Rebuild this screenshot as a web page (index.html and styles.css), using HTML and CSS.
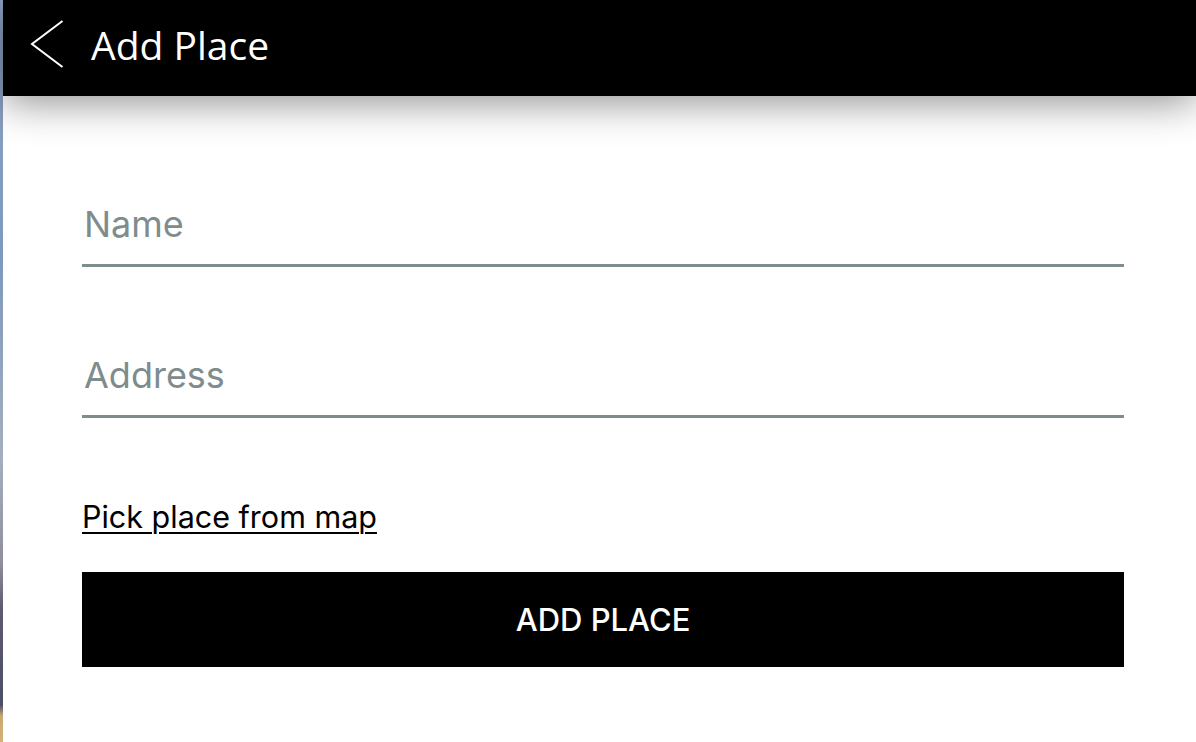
FILE: index.html
```html
<!DOCTYPE html>
<html>
<head>
<meta charset="utf-8">
<link rel="stylesheet" href="styles.css">
</head>
<body>
<div class="frame">
  <div class="edge"></div>
  <div class="app">
    <header class="topbar">
      <svg class="back" width="34" height="50" viewBox="0 0 34 50"><polyline points="32.5,2 2,25 32.5,48" fill="none" stroke="#fff" stroke-width="2"/></svg>
      <h1 class="title">Add Place</h1>
    </header>
    <main class="form">
      <div class="field"><span class="placeholder">Name</span></div>
      <div class="field"><span class="placeholder">Address</span></div>
      <a class="pick" href="#">Pick place from map</a>
      <div class="btn">ADD PLACE</div>
    </main>
  </div>
</div>
</body>
</html>
```
FILE: styles.css
```css
html, body { margin: 0; padding: 0; background: #fff; }
.frame { display: flex; width: 1196px; height: 742px; overflow: hidden; }
.edge {
  width: 3px; flex: none;
  background: linear-gradient(#8ea3c2 0%, #7f98bc 35%, #a3afbe 62%, #8f8e9c 76%, #5e5a70 82%, #4b4f68 95%, #c9a870 96.5%, #d4b27a 100%);
}
.app { flex: 1; display: flex; flex-direction: column; background: #fff; }
.topbar {
  height: 96px; background: #000; display: flex; align-items: center;
  padding-left: 27px; box-shadow: 0 6px 40px rgba(0,0,0,0.45); position: relative; z-index: 1;
}
.back { display: block; margin-bottom: 9px; }
.title {
  margin: 0 0 6px 27px; color: #fff; font-family: "Open Sans", sans-serif;
  font-weight: 400; font-size: 39px; line-height: 50px;
}
.form { padding: 101px 72px 0 79px; display: flex; flex-direction: column; }
.field {
  height: 70px; border-bottom: 3px solid #7f8c8d; display: flex; align-items: flex-end;
  padding-bottom: 20px; box-sizing: border-box;
}
.field + .field { margin-top: 81px; }
.placeholder {
  font-family: "Inter", "Liberation Sans", sans-serif; font-size: 36px; line-height: 40px;
  color: #7f8c8d; padding-left: 2px;
}
.pick {
  margin-top: 81px; align-self: flex-start; color: #000; font-family: "Inter", "Liberation Sans", sans-serif;
  font-size: 30.5px; line-height: 36px; text-decoration: underline; text-underline-offset: 4px; text-decoration-thickness: 2px;
}
.btn {
  margin-top: 37px; height: 95px; background: #000; color: #fff; display: flex; align-items: center; justify-content: center;
  font-family: "Inter", "Liberation Sans", sans-serif; font-size: 31px; font-weight: 500;
}
```
